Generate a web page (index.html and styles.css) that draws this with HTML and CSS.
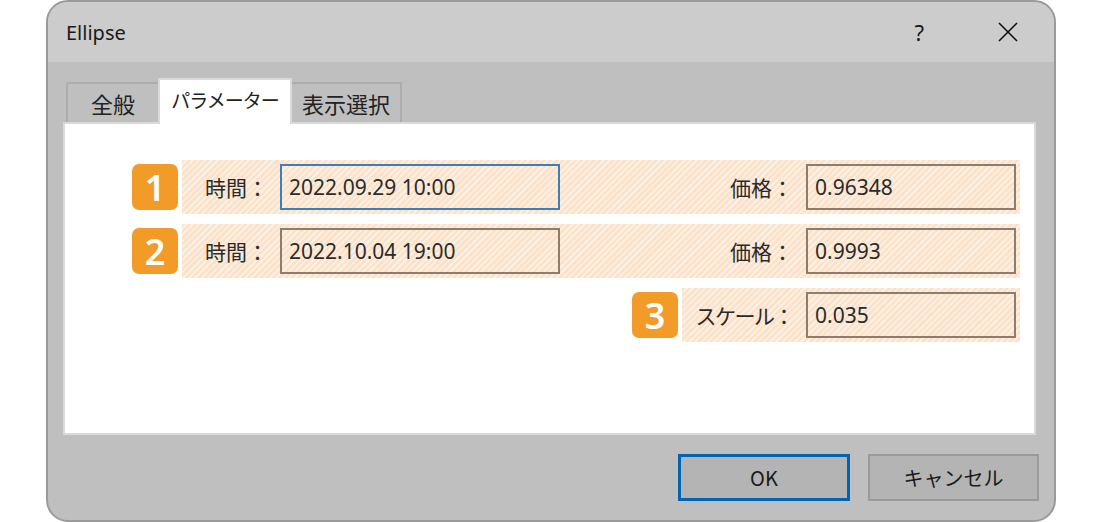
FILE: index.html
```html
<!doctype html>
<html>
  <head>
    <title>Ellipse</title>
    <link rel="stylesheet" href="styles.css">
  </head>
  <body>
    <div class="window">
      <div class="titlebar">
        <span class="title">Ellipse</span>
        <span class="help">?</span>
        <svg class="close" width="20" height="20" viewBox="0 0 20 20">
          <path d="M1 1 L19 19 M19 1 L1 19" stroke="#111" stroke-width="1.6" fill="none"/>
        </svg>
      </div>

      <div class="content">
        <div class="tabs">
          <div class="tab tab-general">全般</div>
          <div class="tab tab-active">パラメーター</div>
          <div class="tab tab-display">表示選択</div>
        </div>

        <div class="panel">
          <div class="row">
            <div class="badge">1</div>
            <div class="band">
              <span class="label label-time">時間：</span>
              <div class="input input-time input-focus">2022.09.29 10:00</div>
              <span class="spacer"></span>
              <span class="label">価格：</span>
              <div class="input input-value">0.96348</div>
            </div>
          </div>
          <div class="row">
            <div class="badge">2</div>
            <div class="band">
              <span class="label label-time">時間：</span>
              <div class="input input-time">2022.10.04 19:00</div>
              <span class="spacer"></span>
              <span class="label">価格：</span>
              <div class="input input-value">0.9993</div>
            </div>
          </div>
          <div class="row row-end">
            <div class="badge">3</div>
            <div class="band band-short">
              <span class="spacer"></span>
              <span class="label label-scale">スケール：</span>
              <div class="input input-value">0.035</div>
            </div>
          </div>
        </div>

        <div class="buttons">
          <div class="button button-ok">OK</div>
          <div class="button">キャンセル</div>
        </div>
      </div>
    </div>
  </body>
</html>
```
FILE: styles.css
```css
body {
    margin: 0;
    background: #fff;
    font-family: "Noto Sans", "Noto Sans CJK JP", sans-serif;
    color: #1a1a1a;
}

.window {
    margin-left: 46px;
    width: 1010px;
    height: 522px;
    box-sizing: border-box;
    border: 2px solid #9a9a9a;
    border-radius: 22px;
    overflow: hidden;
    background: #bfbfbf;
    display: flex;
    flex-direction: column;
}

.titlebar {
    height: 60px;
    flex: none;
    background: #cccccc;
    display: flex;
    align-items: center;
    padding: 0 36px 0 18px;
}

.title {
    font-size: 20px;
    flex: 1;
}

.help {
    font-size: 22px;
    margin-right: 74px;
}

.content {
    padding: 16px 18px 0 15px;
}

.tabs {
    display: flex;
    align-items: flex-end;
    height: 44px;
    margin-left: 3px;
    font-family: "Noto Sans CJK JP", sans-serif;
}

.tab {
    height: 40px;
    box-sizing: border-box;
    border: 2px solid #adadad;
    border-bottom: none;
    display: flex;
    align-items: center;
    justify-content: center;
    font-size: 22px;
    color: #222;
}

.tab-general {
    width: 92px;
    border-right: none;
}

.tab-active {
    width: 134px;
    height: 46px;
    margin-bottom: -2px;
    background: #fff;
    border-color: #dadada;
    position: relative;
    z-index: 1;
    padding-bottom: 6px;
    font-size: 19px;
    letter-spacing: -1px;
}

.tab-display {
    width: 110px;
    border-left: none;
}

.panel {
    height: 313px;
    box-sizing: border-box;
    background: #fff;
    border: 2px solid #dadada;
    padding: 36px 14px 0 67px;
}

.row {
    display: flex;
    align-items: center;
    gap: 4px;
    height: 54px;
    margin-bottom: 10px;
}

.row-end {
    justify-content: flex-end;
}

.badge {
    width: 46px;
    height: 46px;
    flex: none;
    border-radius: 7px;
    background: #f39b29;
    color: #fff;
    font-size: 36px;
    font-weight: 600;
    display: flex;
    align-items: center;
    justify-content: center;
}

.band {
    flex: 1;
    height: 54px;
    box-sizing: border-box;
    display: flex;
    align-items: center;
    padding: 0 4px 0 23px;
    background: repeating-linear-gradient(135deg, #fbe2cb 0 2.6px, #fdf0e3 2.6px 4.4px);
}

.band-short {
    flex: none;
    width: 338px;
    padding-left: 0;
}

.spacer {
    flex: 1;
}

.label {
    flex: none;
    white-space: nowrap;
    font-family: "Noto Sans CJK JP", sans-serif;
    font-size: 21px;
    color: #2a2a2a;
    margin-right: 13px;
}

.label-time {
    width: 75px;
    margin-right: 0;
}

.label-scale {
    letter-spacing: -1.5px;
}

.input {
    flex: none;
    height: 46px;
    box-sizing: border-box;
    border: 2px solid #8f7c6a;
    display: flex;
    align-items: center;
    padding-left: 7px;
    font-size: 21px;
    color: #2b2b2b;
    white-space: nowrap;
}

.input-time {
    width: 280px;
}

.input-value {
    width: 210px;
}

.input-focus {
    border-color: #3d7fb6;
}

.buttons {
    display: flex;
    justify-content: flex-end;
    gap: 18px;
    margin-top: 19px;
    margin-right: -3px;
}

.button {
    width: 171px;
    height: 47px;
    box-sizing: border-box;
    border: 2px solid #9a9a9a;
    background: #b4b4b4;
    display: flex;
    align-items: center;
    justify-content: center;
    font-family: "Noto Sans CJK JP", sans-serif;
    font-size: 20px;
}

.button-ok {
    width: 172px;
    border: 3px solid #0063b1;
}
```
